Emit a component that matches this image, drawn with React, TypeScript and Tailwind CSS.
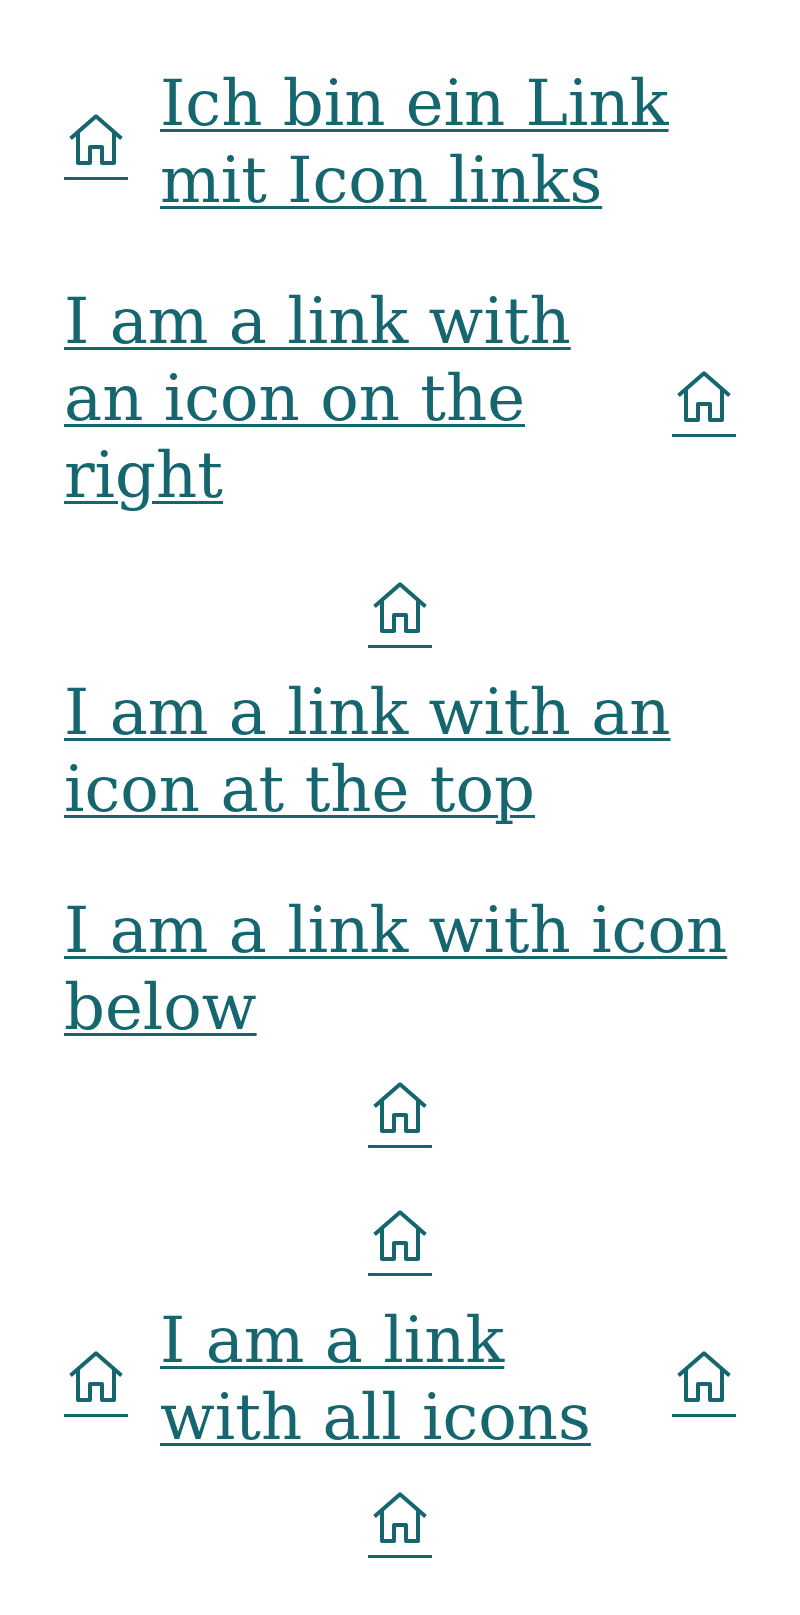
import React from "react";

function Home() {
  return (
    <span className="relative block h-16 w-16 shrink-0 after:absolute after:left-0 after:top-[68px] after:h-[3px] after:w-16 after:bg-[#166670]">
      <svg viewBox="0 0 64 64" className="block h-16 w-16" fill="none" stroke="currentColor" strokeWidth="4" strokeLinejoin="round">
        <path d="M6.500 29.500 32 7.300l25.500 22.200M14 23v31h12V38h12v16h12V23" />
      </svg>
    </span>
  );
}

const text =
  "block pt-px -mb-px whitespace-nowrap font-['DejaVu_Serif',serif] text-[64px] leading-[77px] underline decoration-[3px] underline-offset-[4px]";

export default function App() {
  return (
    <main className="flex w-[800px] flex-col gap-16 bg-white p-16 text-[#166670]">
      <a className="flex items-center gap-8">
        <Home />
        <span className={text}>Ich bin ein Link<br />mit Icon links</span>
      </a>
      <a className="flex items-center justify-between">
        <span className={text}>I am a link with<br />an icon on the<br />right</span>
        <Home />
      </a>
      <a className="flex flex-col items-center gap-8">
        <Home />
        <span className={`${text} w-full`}>I am a link with an<br />icon at the top</span>
      </a>
      <a className="flex flex-col items-center gap-8">
        <span className={`${text} w-full`}>I am a link with icon<br />below</span>
        <Home />
      </a>
      <a className="flex flex-col items-center gap-8">
        <Home />
        <span className="flex w-full items-center gap-8">
          <Home />
          <span className={`${text} flex-1`}>I am a link<br />with all icons</span>
          <Home />
        </span>
        <Home />
      </a>
    </main>
  );
}
